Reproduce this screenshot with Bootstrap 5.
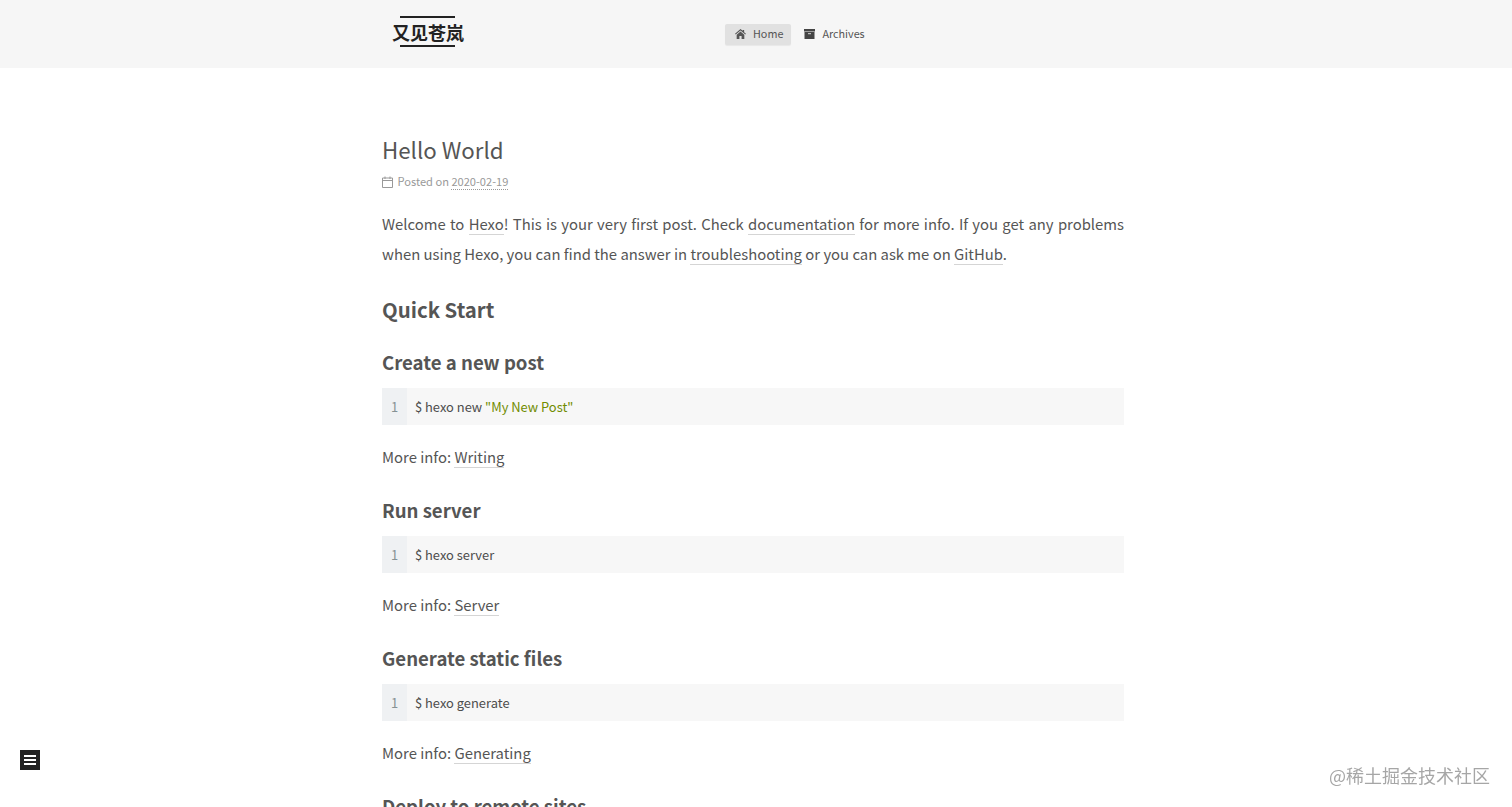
<!DOCTYPE html>
<html lang="en">

<head>
    <meta charset="UTF-8">
    <meta name="viewport" content="width=device-width, initial-scale=1.0">
    <title>Hello World | 又见苍岚</title>
    <link href="https://cdn.jsdelivr.net/npm/bootstrap@5.3.3/dist/css/bootstrap.min.css" rel="stylesheet">
    <style>
        body {
            font-family: "Noto Sans CJK SC", "Noto Sans", sans-serif;
            color: #555;
            background: #fff;
            font-size: 14.85px;
            line-height: 30px;
        }
        .site-head {
            background: #f6f6f6;
            height: 68px;
        }
        .site-inner {
            width: 742px;
            margin-left: 382px;
        }
        .brand-box {
            width: 343px;
            padding: 16px 0 0 10px;
        }
        .brand-name {
            display: inline-block;
            position: relative;
            width: 72px;
            height: 31px;
            font-size: 18px;
            font-weight: 700;
            line-height: 32px;
            color: #222;
            text-decoration: none;
            white-space: nowrap;
        }
        .brand-name::before,
        .brand-name::after {
            content: "";
            position: absolute;
            left: 8px;
            width: 55px;
            height: 2px;
            background: #222;
        }
        .brand-name::before { top: 0; }
        .brand-name::after { bottom: 0; }
        .menu-box { padding-top: 24px; }
        .menu-link {
            display: flex;
            align-items: center;
            height: 21px;
            padding: 0 8px 2px 10px;
            margin-right: 3px;
            font-size: 10.8px;
            line-height: 19px;
            color: #555;
            text-decoration: none;
            border-radius: 2px;
        }
        .menu-link svg { margin-right: 7px; }
        .menu-active {
            background: #e1e1e1;
            box-shadow: 0 1px 1px rgba(0, 0, 0, .06);
        }
        .post-wrap { padding-top: 63px; }
        .post-title {
            font-size: 22.3px;
            line-height: 36px;
            font-weight: 400;
            margin: 0;
        }
        .post-meta {
            font-size: 11.1px;
            line-height: 20px;
            color: #999;
            margin: 4px 0 18px;
        }
        .post-meta svg { margin: -2px 2px 0 0; vertical-align: middle; }
        .post-date {
            color: #999;
            border-bottom: 1px dotted #999;
        }
        .post-intro { text-align: justify; }
        .post-wrap p { margin: 0 0 13px; }
        .post-wrap a {
            color: #555;
            text-decoration: none;
            border-bottom: 1px solid #d5d5d5;
        }
        .post-h2 {
            font-size: 20.4px;
            line-height: 36px;
            font-weight: 600;
            margin: 22px 0 20px;
        }
        .post-h3 {
            font-size: 18.6px;
            line-height: 29px;
            font-weight: 600;
            margin: 0 0 12px;
        }
        .code-row {
            background: #f7f7f7;
            height: 37px;
            font-size: 12.9px;
            line-height: 37px;
            margin-bottom: 17px;
            color: #4d4d4c;
        }
        .code-num {
            width: 25px;
            text-align: center;
            background: #eff1f3;
            color: #869194;
            margin-right: 8px;
        }
        .code-str { color: #718c00; }
        .more-line { margin-bottom: 23px !important; }
        .side-toggle {
            position: fixed;
            left: 20px;
            top: 750px;
            width: 20px;
            height: 20px;
            background: #222;
            padding: 4px;
            gap: 2px;
        }
        .side-toggle span {
            display: block;
            height: 2px;
            background: #fff;
        }
        .jj-mark {
            position: fixed;
            right: 22px;
            top: 761px;
            font-size: 18px;
            line-height: 28px;
            color: rgba(150, 150, 150, .85);
            white-space: nowrap;
        }
    </style>
</head>

<body>
    <header class="site-head">
        <div class="site-inner d-flex">
            <div class="brand-box">
                <a class="brand-name" href="#">又见苍岚</a>
            </div>
            <nav class="menu-box d-flex align-items-start">
                <a class="menu-link menu-active" href="#">
                    <svg width="11" height="10" viewBox="0 0 12 11"><path fill="#555" d="M6 0 0 5.300l.7.8L6 1.600l5.300 4.500.7-.8-2-1.800V1H8.500v1L6 0zM6 2.700 1.800 6.200V11h3V7.800h2.400V11h3V6.200z"/></svg>
                    Home
                </a>
                <a class="menu-link" href="#">
                    <svg width="11" height="10" viewBox="0 0 11 10"><path fill="#444" d="M0 0h11v2.500H0zM.5 3h10v7H.5z"/><path fill="#ddd" d="M4 4.200h3v1H4z"/></svg>
                    Archives
                </a>
            </nav>
        </div>
    </header>

    <main class="site-inner post-wrap">
        <h1 class="post-title">Hello World</h1>
        <div class="post-meta">
            <svg width="11" height="12" viewBox="0 0 11 12"><path fill="none" stroke="#999" d="M.5 2h10v9.500H.5zM.5 4.500h10M3 .5V3M8 .5V3"/></svg>
            Posted on <span class="post-date">2020-02-19</span>
        </div>
        <p class="post-intro mb-0">Welcome to <a href="#">Hexo</a>! This is your very first post. Check <a href="#">documentation</a> for more info. If you get any problems when using Hexo, you can find the answer in <a href="#">troubleshooting</a> or you can ask me on <a href="#">GitHub</a>.</p>

        <h2 class="post-h2">Quick Start</h2>

        <h3 class="post-h3">Create a new post</h3>
        <div class="code-row d-flex">
            <div class="code-num">1</div>
            <div>$ hexo new <span class="code-str">"My New Post"</span></div>
        </div>
        <p class="more-line">More info: <a href="#">Writing</a></p>

        <h3 class="post-h3">Run server</h3>
        <div class="code-row d-flex">
            <div class="code-num">1</div>
            <div>$ hexo server</div>
        </div>
        <p class="more-line">More info: <a href="#">Server</a></p>

        <h3 class="post-h3">Generate static files</h3>
        <div class="code-row d-flex">
            <div class="code-num">1</div>
            <div>$ hexo generate</div>
        </div>
        <p class="more-line">More info: <a href="#">Generating</a></p>

        <h3 class="post-h3">Deploy to remote sites</h3>
        <div class="code-row d-flex">
            <div class="code-num">1</div>
            <div>$ hexo deploy</div>
        </div>
        <p class="more-line">More info: <a href="#">Deployment</a></p>
    </main>

    <div class="side-toggle d-flex flex-column justify-content-center">
        <span></span>
        <span></span>
        <span></span>
    </div>
    <div class="jj-mark">@稀土掘金技术社区</div>

    <script src="https://cdn.jsdelivr.net/npm/bootstrap@5.3.3/dist/js/bootstrap.bundle.min.js"></script>
</body>

</html>
